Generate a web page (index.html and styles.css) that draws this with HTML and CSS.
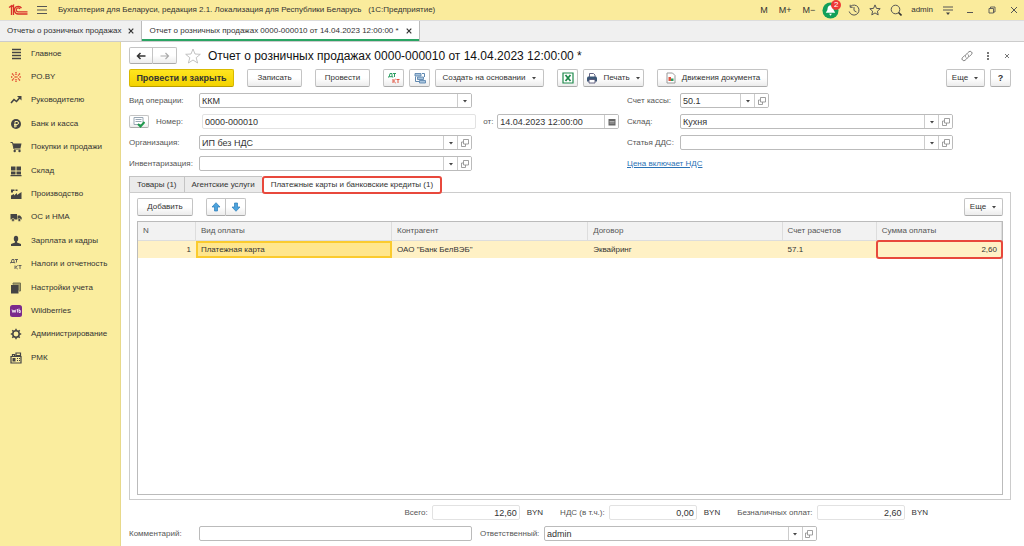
FILE: index.html
```html
<!DOCTYPE html>
<html lang="ru">
<head>
<meta charset="utf-8">
<title>Отчет о розничных продажах</title>
<link rel="stylesheet" href="styles.css">
</head>
<body>
<svg class="defs" width="0" height="0" aria-hidden="true">
  <symbol id="open" viewBox="0 0 10 10"><path d="M3.500 1.500h5v4.500h-5zM3.500 4H1.500v4.500h4V6" fill="none" stroke="#888" stroke-width=".8"/></symbol>
  <symbol id="caret" viewBox="0 0 6 4"><path d="M1 1h4L3 3.500z" fill="#444"/></symbol>
</svg>
<div class="window">
  <header class="titlebar">
    <svg class="logo" viewBox="0 0 20 12"><g fill="none" stroke="#d9312a" stroke-width="1.300"><path d="M1 3.500 3.500 1.800V11M3 3.500 5.500 1.300V11"/><path d="M13.500 4.200A3.800 3.800 0 1 0 10.500 10H19.500"/><path d="M12 5A2 2 0 1 0 10.500 7.900H19.500" stroke-width="1.200"/></g></svg>
    <button class="plain" aria-label="Меню"><svg class="ic12" viewBox="0 0 12 12"><path d="M1 2.500h10M1 6h10M1 9.500h10" stroke="#555"/></svg></button>
    <span class="app-title">Бухгалтерия для Беларуси, редакция 2.1. Локализация для Республики Беларусь &nbsp;&nbsp;(1С:Предприятие)</span>
    <div class="memory"><button class="plain">M</button><button class="plain">M+</button><button class="plain">M−</button></div>
    <div class="sys">
      <button class="plain bell" aria-label="Уведомления"><svg viewBox="0 0 18 18"><circle cx="9" cy="9" r="8.500" fill="#12a05a"/><path d="M9 3.500c-3 .5-3 3-3.300 5L4 11.500h10L12.300 8.500C12 6 11.500 4 9 3.500zM7.500 12.500h3L9 14.500z" fill="#fff"/></svg><span class="badge">2</span></button>
      <button class="plain" aria-label="История"><svg class="ic12" viewBox="0 0 12 12"><path d="M2.500 2.500A5 5 0 1 1 1.200 7.500M6 3v3.500l2.500 1.500M2.200.8v2.500h2.500" fill="none" stroke="#555"/></svg></button>
      <button class="plain" aria-label="Избранное"><svg class="ic12" viewBox="0 0 12 12"><path d="m6 .9 1.500 3.500 3.700.3-2.800 2.500.8 3.700L6 8.900l-3.200 2 .8-3.700L.8 4.700l3.700-.3z" fill="none" stroke="#555"/></svg></button>
      <button class="plain" aria-label="Поиск"><svg class="ic12" viewBox="0 0 12 12"><circle cx="5.500" cy="5.500" r="4.300" fill="none" stroke="#555"/><path d="m8.500 8.500 3 3" stroke="#333" stroke-width="1.600"/></svg></button>
      <button class="plain">admin</button>
      <button class="plain" aria-label="Сервис"><svg class="ic12" viewBox="0 0 12 12"><path d="M1 3h10M1 6h10" stroke="#555"/><path d="M4 8.500h4L6 11z" fill="#444"/></svg></button>
    </div>
    <div class="win">
      <button class="plain" aria-label="Свернуть"><svg class="ic8" viewBox="0 0 8 8"><path d="M1 6.500h6" stroke="#555"/></svg></button>
      <button class="plain" aria-label="Развернуть"><svg class="ic8" viewBox="0 0 8 8"><path d="M1 2.500h4.500v4.500H1zM2.500 2.500V1H7v5H5.500" fill="none" stroke="#555" stroke-width=".9"/></svg></button>
      <button class="plain" aria-label="Закрыть окно"><svg class="ic8" viewBox="0 0 8 8"><path d="m1 1 6 6M7 1 1 7" stroke="#555"/></svg></button>
    </div>
  </header>

  <nav class="doc-tabs">
    <div class="doc-tab"><span>Отчеты о розничных продажах</span><button class="plain" aria-label="Закрыть вкладку"><svg class="ic6" viewBox="0 0 6 6"><path d="m.7.7 4.600 4.600M5.300.7.7 5.300" stroke="#333" stroke-width="1.200"/></svg></button></div>
    <div class="doc-tab current"><span>Отчет о розничных продажах 0000-000010 от 14.04.2023 12:00:00 *</span><button class="plain" aria-label="Закрыть вкладку"><svg class="ic6" viewBox="0 0 6 6"><path d="m.7.7 4.600 4.600M5.300.7.7 5.300" stroke="#333" stroke-width="1.200"/></svg></button></div>
  </nav>

  <div class="body">
    <nav class="sidebar">
      <ul>
        <li><a href="#"><svg viewBox="0 0 12 12"><path d="M2 1.500h9M2 4.500h9M2 7.500h9M2 10.500h9" stroke="#444" stroke-width="1.700"/></svg>Главное</a></li>
        <li><a href="#"><svg viewBox="0 0 12 12"><path d="M6 1v3M6 8v3M1 6h1.500M9.500 6H11M2 2.500l2 2M10 2.500l-2 2M2 9.500l2-2M10 9.500l-2-2M4.500 6h3" stroke="#e0402c" stroke-width="1.300" stroke-dasharray="1.300 .5"/></svg>PO.BY</a></li>
        <li><a href="#"><svg viewBox="0 0 12 12"><path d="m1 9 3-3.500 2.500 2L10 3.500" fill="none" stroke="#444" stroke-width="1.600"/><path d="M7 2h4.500v4.500z" fill="#444"/></svg>Руководителю</a></li>
        <li><a href="#"><svg viewBox="0 0 12 12"><circle cx="6" cy="6" r="5" fill="#444"/><path d="M5 9.500V3.500h2a1.500 1.500 0 0 1 0 3H4M4 8h3" fill="none" stroke="#faed9e"/></svg>Банк и касса</a></li>
        <li><a href="#"><svg viewBox="0 0 12 12"><path d="M.5 1.500H2.500L4 8h6.500" fill="none" stroke="#444"/><path d="M2.800 2.500h8.700L10.500 7H4z" fill="#444"/><circle cx="4.700" cy="10" r="1.200" fill="#444"/><circle cx="9.500" cy="10" r="1.200" fill="#444"/></svg>Покупки и продажи</a></li>
        <li><a href="#"><svg viewBox="0 0 12 12"><path d="M1 1.500h4.500v4H1zM6.500 1.500H11v4H6.500zM1 6.500h4.500v3H1zM6.500 6.500H11v3H6.500zM.5 10h11v1.200H.5z" fill="#444"/></svg>Склад</a></li>
        <li><a href="#"><svg viewBox="0 0 12 12"><path d="M1 11V7.500L4 6v1.500l3-2.500v2l4.500-3v7z" fill="#444"/><path d="M1 1.500h3.500V3H3v1.500H1zM5.500 1.500h2V3h-2z" fill="#444"/></svg>Производство</a></li>
        <li><a href="#"><svg viewBox="0 0 12 12"><path d="M.5 3h6.500v5.500H.5zM7.500 4.500H10l1.700 2v2H7.500z" fill="#444"/><g fill="#444" stroke="#faed9e" stroke-width=".6"><circle cx="3" cy="9" r="1.500"/><circle cx="9.300" cy="9" r="1.500"/></g></svg>ОС и НМА</a></li>
        <li><a href="#"><svg viewBox="0 0 12 12"><ellipse cx="6" cy="3.700" rx="2.200" ry="2.900" fill="#444"/><path d="M5 6h2v1.500l4 1.500v2H1V9l4-1.500z" fill="#444"/></svg>Зарплата и кадры</a></li>
        <li><a href="#"><svg viewBox="0 0 12 12"><g fill="none" stroke="#555" stroke-width=".9"><path d="M.5 5.300V4.500h4.300v.8M1.300 4.500 2 1.500h2v3M5 1.500h3M6.500 1.500v3"/><path d="M5 7.500V11M7.700 7.500 5.500 9.200 7.700 11M8.500 7.500h3M10 7.500V11"/></g></svg>Налоги и отчетность</a></li>
        <li><a href="#"><svg viewBox="0 0 12 12"><path d="M3 2.500V1h7.500v8H9" fill="#a19b6c" stroke="#777450"/><path d="M1 3h7.500v8.500H1z" fill="#444"/></svg>Настройки учета</a></li>
        <li><a href="#"><svg viewBox="0 0 12 12"><rect width="12" height="12" rx="2.500" fill="#7a2a8c"/><path d="m2 4.500 1 3 1-2.500 1 2.500 1-3M7.500 4v3.500M9 3.500v4h1.300V5.500H9" fill="none" stroke="#fff" stroke-width=".8"/></svg>Wildberries</a></li>
        <li><a href="#"><svg viewBox="0 0 12 12"><circle cx="6" cy="6" r="3.200" fill="none" stroke="#444" stroke-width="1.500"/><path d="M6 .8v2M6 9.200v2M.8 6h2M9.200 6h2M2.300 2.300l1.400 1.400M8.300 8.300l1.400 1.400M9.700 2.300 8.300 3.700M3.700 8.300 2.300 9.700" stroke="#444" stroke-width="1.500"/></svg>Администрирование</a></li>
        <li><a href="#"><svg viewBox="0 0 12 12"><path d="M1 4.500h10v6.500H1zM6 1h4.500v2.500H6zM2.500 4V2.500h2V4" fill="none" stroke="#444" stroke-width="1.200"/><path d="M2.500 6h3v3.500h-3zM7 6h1v1H7zM9 6h1v1H9zM7 8h1v1H7zM9 8h1v1H9z" fill="#444"/></svg>РМК</a></li>
      </ul>
    </nav>

    <main class="doc">
      <div class="heading">
        <div class="pair">
          <button class="btn" aria-label="Назад"><svg class="ic10" viewBox="0 0 10 10"><path d="M1.500 5h8M4.500 2 1.500 5l3 3" fill="none" stroke="#333" stroke-width="1.500"/></svg></button>
          <button class="btn" aria-label="Вперед"><svg class="ic10" viewBox="0 0 10 10"><path d="M.5 5h8M5.500 2l3 3-3 3" fill="none" stroke="#aaa" stroke-width="1.200"/></svg></button>
        </div>
        <button class="plain" aria-label="В избранное"><svg class="ic16" viewBox="0 0 16 16"><path d="m8 1 2 5 5.300.3-4.100 3.400 1.400 5.300L8 12l-4.600 3 1.400-5.300L.7 6.300 6 6z" fill="none" stroke="#bbb" stroke-width=".9"/></svg></button>
        <h1>Отчет о розничных продажах 0000-000010 от 14.04.2023 12:00:00 *</h1>
        <div class="heading-tools">
          <button class="plain" aria-label="Ссылка"><svg class="ic12" viewBox="0 0 12 12"><path d="M5 7.500C3.500 6 4.500 5 6.500 3s3-2 4-1 .5 2-1 3.500L8.500 6.500M7 4.500C8.500 6 7.500 7 5.500 9s-3 2-4 1-.5-2 1-3.500L3.500 5.500" fill="none" stroke="#777"/></svg></button>
          <button class="plain" aria-label="Действия"><svg class="ic8" viewBox="0 0 8 8"><path d="M3 0h2v2H3zM3 3h2v2H3zM3 6h2v2H3z" fill="#777"/></svg></button>
          <button class="plain" aria-label="Закрыть"><svg class="ic8" viewBox="0 0 8 8"><path d="m2 2 4 4M6 2 2 6" stroke="#777"/></svg></button>
        </div>
      </div>

      <div class="toolbar">
        <button class="btn primary">Провести и закрыть</button>
        <button class="btn wide">Записать</button>
        <button class="btn wide">Провести</button>
        <div class="group">
          <button class="btn square" aria-label="Дт Кт"><svg class="ic12" viewBox="0 0 12 12"><path d="M.5 5.500V4.700h4.300v.8M1.300 4.500 2 1.500h2v3M5 1.500h3M6.500 1.500V5" fill="none" stroke="#2a9d60"/><path d="M5 7V11M7.700 7 5.500 9l2.200 2M8.500 7.500h3M10 7.500V11" fill="none" stroke="#e0533f"/></svg></button>
          <button class="btn square" aria-label="Структура подчиненности"><svg class="ic12" viewBox="0 0 12 12"><path d="M1 1.500h6v2.500H1zM3.500 5h6v2.500h-6zM5.500 8.500h6V11h-6z" fill="#a9c4dd" stroke="#5f88b0" stroke-width=".9"/><path d="M8 1.500h2.500V5M1.500 4.500v5h3.500" fill="none" stroke="#5f88b0"/></svg></button>
          <button class="btn create">Создать на основании<svg class="caret"><use href="#caret"/></svg></button>
        </div>
        <div class="group">
          <button class="btn square" aria-label="Excel"><svg class="ic12" viewBox="0 0 12 12"><path d="M1 1h10v10H1z" fill="#fff" stroke="#1f8a4c" stroke-width="1.200"/><path d="m3.500 3 5 6M8.500 3l-5 6" stroke="#1f8a4c" stroke-width="1.800"/></svg></button>
          <button class="btn print"><svg class="ic12" viewBox="0 0 12 12"><path d="M3.500 5V1.500h4L9 3v2" fill="#fff" stroke="#557" stroke-width=".9"/><path d="M1 5.500 2 4.500h8l1 1v4H1z" fill="#3d5878"/><path d="M3 7.500h6V11H3z" fill="#fff" stroke="#557" stroke-width=".9"/></svg>Печать<svg class="caret"><use href="#caret"/></svg></button>
        </div>
        <button class="btn moves"><svg class="ic12" viewBox="0 0 12 12"><path d="M2 1h5.500L10 3.500V11H2z" fill="#fff" stroke="#999"/><path d="M3.500 5H6v4H3.500z" fill="#e0533f"/><path d="M6 6.500h2.500V9H6z" fill="#2a9d60"/></svg>Движения документа</button>
        <div class="group end">
          <button class="btn more">Еще<svg class="caret"><use href="#caret"/></svg></button>
          <button class="btn square help">?</button>
        </div>
      </div>

      <form class="form">
        <div class="col-left">
          <div class="row part"><label for="op">Вид операции:</label><div class="field"><input id="op" value="ККМ"><button type="button" aria-label="Выбрать"><svg class="caret"><use href="#caret"/></svg></button></div></div>
          <div class="row">
            <button type="button" class="btn check" aria-label="Проведен"><svg class="ic12" viewBox="0 0 12 12"><path d="M1 1.500h9v7H1z" fill="#fff" stroke="#9aa8b5"/><path d="M2.500 3.500h6M2.500 5.500h6" stroke="#9aa8b5"/><path d="m5 8 2.500 2.500L11.500 6" fill="none" stroke="#1f9a4c" stroke-width="2"/></svg></button>
            <label class="num" for="num">Номер:</label><div class="field light number"><input id="num" value="0000-000010"></div>
            <label class="from" for="date">от:</label><div class="field date"><input id="date" value="14.04.2023 12:00:00"><button type="button" aria-label="Календарь"><svg class="ic8" viewBox="0 0 8 8"><path d="M.5 1h7v6.500h-7z" fill="#666"/><path d="M1.500 3.500h5M1.500 5h5" stroke="#ddd" stroke-width=".6"/></svg></button></div>
          </div>
          <div class="row part"><label for="org">Организация:</label><div class="field"><input id="org" value="ИП без НДС"><button type="button" aria-label="Выбрать"><svg class="caret"><use href="#caret"/></svg></button><button type="button" aria-label="Открыть"><svg class="ic10"><use href="#open"/></svg></button></div></div>
          <div class="row part"><label for="inv">Инвентаризация:</label><div class="field"><input id="inv"><button type="button" aria-label="Выбрать"><svg class="caret"><use href="#caret"/></svg></button><button type="button" aria-label="Открыть"><svg class="ic10"><use href="#open"/></svg></button></div></div>
        </div>
        <div class="col-right">
          <div class="row short"><label for="acc">Счет кассы:</label><div class="field"><input id="acc" value="50.1"><button type="button" aria-label="Выбрать"><svg class="caret"><use href="#caret"/></svg></button><button type="button" aria-label="Открыть"><svg class="ic10"><use href="#open"/></svg></button></div></div>
          <div class="row part"><label for="store">Склад:</label><div class="field"><input id="store" value="Кухня"><button type="button" aria-label="Выбрать"><svg class="caret"><use href="#caret"/></svg></button><button type="button" aria-label="Открыть"><svg class="ic10"><use href="#open"/></svg></button></div></div>
          <div class="row part"><label for="dds">Статья ДДС:</label><div class="field"><input id="dds"><button type="button" aria-label="Выбрать"><svg class="caret"><use href="#caret"/></svg></button><button type="button" aria-label="Открыть"><svg class="ic10"><use href="#open"/></svg></button></div></div>
          <div class="row"><a class="link" href="#">Цена включает НДС</a></div>
        </div>
      </form>

      <div class="tabs">
        <button class="tab">Товары (1)</button><button class="tab">Агентские услуги</button><button class="tab active">Платежные карты и банковские кредиты (1)</button>
      </div>
      <section class="panel">
        <div class="panel-tools">
          <button class="btn add">Добавить</button>
          <div class="pair">
            <button class="btn" aria-label="Вверх"><svg class="ic10" viewBox="0 0 10 10"><path d="M5 .7 9 5H6.500v4h-3V5H1z" fill="#4da3dd" stroke="#2b7db8" stroke-width=".7"/></svg></button>
            <button class="btn" aria-label="Вниз"><svg class="ic10" viewBox="0 0 10 10"><path d="M5 9.300 9 5H6.500V1h-3v4H1z" fill="#4da3dd" stroke="#2b7db8" stroke-width=".7"/></svg></button>
          </div>
          <button class="btn more">Еще<svg class="caret"><use href="#caret"/></svg></button>
        </div>
        <div class="grid">
          <table>
            <thead><tr><th class="c-n">N</th><th class="c-kind">Вид оплаты</th><th class="c-agent">Контрагент</th><th class="c-deal">Договор</th><th class="c-acc">Счет расчетов</th><th class="c-sum">Сумма оплаты</th></tr></thead>
            <tbody><tr><td class="right">1</td><td class="selected">Платежная карта</td><td>ОАО "Банк БелВЭБ"</td><td>Эквайринг</td><td>57.1</td><td class="right marked">2,60</td></tr></tbody>
          </table>
        </div>
      </section>

      <div class="totals">
        <label for="t1">Всего:</label><div class="field light"><input id="t1" value="12,60" readonly></div><span>BYN</span>
        <label for="t2">НДС (в т.ч.):</label><div class="field light"><input id="t2" value="0,00" readonly></div><span>BYN</span>
        <label for="t3">Безналичных оплат:</label><div class="field light"><input id="t3" value="2,60" readonly></div><span>BYN</span>
      </div>
      <div class="footer">
        <label class="comment" for="com">Комментарий:</label><div class="field"><input id="com"></div>
        <label for="resp">Ответственный:</label><div class="field"><input id="resp" value="admin"><button type="button" aria-label="Выбрать"><svg class="caret"><use href="#caret"/></svg></button><button type="button" aria-label="Открыть"><svg class="ic10"><use href="#open"/></svg></button></div>
      </div>
    </main>
  </div>
</div>
</body>
</html>
```
FILE: styles.css
```css
* { box-sizing: border-box; }
body { margin: 0; font: 8px/12px "Liberation Sans", Arial, sans-serif; color: #333; background: #fff; }
button, input { font: inherit; color: inherit; margin: 0; }
svg { display: block; flex: none; }
.defs { position: absolute; }
.ic6 { width: 6px; height: 6px; }
.ic8 { width: 8px; height: 8px; }
.ic10 { width: 10px; height: 10px; }
.ic12 { width: 12px; height: 12px; }
.ic16 { width: 16px; height: 16px; }
.caret { width: 6px; height: 4px; }
.window { min-height: 100vh; display: flex; flex-direction: column; }
.plain { border: 0; padding: 0; background: none; display: flex; align-items: center; white-space: nowrap; }

.titlebar { height: 20px; display: flex; align-items: center; padding: 0 6px 0 8px; background: #faeb9c; }
.logo { width: 20px; height: 12px; margin-right: 8px; }
.app-title { margin-left: 10px; flex: 1; white-space: nowrap; }
.memory { display: flex; gap: 11px; margin-right: 7px; font-size: 9px; }
.sys { display: flex; align-items: center; gap: 9px; }
.bell { position: relative; }
.bell svg { width: 17px; height: 17px; }
.badge { position: absolute; top: -2px; right: -2px; width: 10px; height: 10px; border-radius: 5px; background: #ee3a36; color: #fff; line-height: 10px; text-align: center; }
.win { display: flex; gap: 14px; margin-left: 12px; }

.doc-tabs { height: 22px; display: flex; background: #f0f0f0; border-top: 1px solid #ddd; border-bottom: 1px solid #ccc; }
.doc-tab { display: flex; align-items: center; gap: 7px; padding: 0 7px; white-space: nowrap; border-right: 1px solid #bbb; }
.doc-tab.current { background: #fff; box-shadow: inset 0 -2px #2aa463; }

.body { flex: 1; display: flex; }
.sidebar { width: 121px; flex: none; background: #faed9e; border-right: 1px solid #e8d98a; }
.sidebar ul { list-style: none; margin: 0; padding: 0; height: 65%; display: grid; grid-auto-rows: 1fr; }
.sidebar li { display: flex; align-items: center; }
.sidebar a { display: flex; align-items: center; gap: 9px; padding-left: 10px; color: #333; text-decoration: none; white-space: nowrap; }
.sidebar svg { width: 12px; height: 12px; }

.doc { flex: 1; min-width: 0; display: flex; flex-direction: column; padding: 5px 13px 5px 8px; }
.btn { height: 18px; display: flex; align-items: center; justify-content: center; gap: 5px; padding: 0 8px; border: 1px solid #c4c4c4; border-bottom-color: #aaa; border-radius: 2px; background: linear-gradient(#fff, #fff 50%, #ececec); white-space: nowrap; }
.pair { display: flex; }
.pair .btn { width: 24px; height: 17px; padding: 0; border-radius: 2px 0 0 2px; }
.pair .btn + .btn { border-left: 0; border-radius: 0 2px 2px 0; }
.heading { display: flex; align-items: center; gap: 7px; height: 17px; }
.heading .pair { margin-right: 1px; }
h1 { margin: 0; font-size: 12px; font-weight: 400; line-height: 16px; color: #111; white-space: nowrap; }
.heading-tools { margin-left: auto; display: flex; align-items: center; gap: 11px; }

.toolbar { display: flex; gap: 13px; margin-top: 5px; }
.group { display: flex; gap: 5px; }
.end { margin-left: auto; }
.primary { width: 105px; padding: 0; font-size: 9px; font-weight: 700; color: #333; background: linear-gradient(#ffe51f, #f3d200); border-color: #d8b900; border-bottom-color: #b89d00; }
.wide { width: 55px; padding: 0; }
.square { width: 21px; padding: 0; }
.create { width: 109px; padding: 0; }
.print { width: 61px; padding: 0; }
.moves { width: 111px; padding: 0; }
.more { width: 39px; padding: 0; }
.help { font-size: 9px; font-weight: 700; }

.form { display: flex; gap: 8px; margin-top: 6px; }
.col-left { flex: 490 1 0; }
.col-right { flex: 384 1 0; }
.col-left, .col-right { min-width: 0; display: flex; flex-direction: column; gap: 6px; }
.row { display: flex; align-items: center; height: 15px; }
.row label { width: 70px; flex: none; color: #555; white-space: nowrap; }
.col-left .part { width: 70%; }
.col-right .part { width: 85%; }
.col-right .short { width: 37%; }
.col-right label { width: 53px; }
.field { flex: 1 1 0; min-width: 0; height: 15px; display: flex; border: 1px solid #bbb; border-radius: 2px; background: #fff; overflow: hidden; }
.field input { flex: 1; min-width: 0; width: 0; border: 0; padding: 0 2px; background: none; outline: 0; font-size: 9px; }
.field button { width: 14px; flex: none; padding: 0; border: 0; border-left: 1px solid #ccc; background: #fff; display: flex; align-items: center; justify-content: center; }
.light { border-color: #e2e2e2; }
.check { width: 20px; height: 13px; padding: 0; }
.row .num { width: 46px; margin-left: 7px; }
.number { flex-grow: 275; }
.row .from { width: 14px; margin-left: 7px; }
.date { flex-grow: 121; }
.link { color: #2a72b5; font-size: 8px; }

.tabs { display: flex; align-items: flex-start; margin-top: 5px; height: 16px; }
.tab { height: 17px; border: 1px solid #c4c4c4; border-right: 0; background: #ebebeb; padding: 0 7px; white-space: nowrap; }
.tab.active { background: #fff; border: 2px solid #e8483c; border-radius: 3px; height: 18px; z-index: 1; }
.panel { flex: 1; display: flex; flex-direction: column; border: 1px solid #ccc; padding: 5px 7px 4px; }
.panel-tools { display: flex; align-items: center; }
.add { width: 56px; padding: 0; margin-right: 13px; }
.panel-tools .pair .btn { width: 20px; height: 18px; }
.panel-tools .more { margin-left: auto; }
.grid { flex: 1; margin-top: 5px; border: 1px solid #bbb; }
table { width: 100%; table-layout: fixed; border-collapse: separate; border-spacing: 0; }
th, td { padding: 0 5px; text-align: left; font-weight: 400; white-space: nowrap; }
th { height: 19px; color: #555; background: #f2f2f2; border-right: 1px solid #ddd; border-bottom: 1px solid #ddd; }
td { height: 17px; background: #fff1c5; }
.c-n { width: 6.7%; }
.c-kind { width: 22.7%; }
.c-agent { width: 22.7%; }
.c-deal { width: 22.5%; }
.c-acc { width: 10.9%; }
.c-sum { width: 14.5%; }
.right { text-align: right; }
.selected { background: #ffe68d; box-shadow: inset 0 0 0 2px #fbcb2e; }
.marked { outline: 2px solid #e8483c; outline-offset: -1px; border-radius: 2px; }

.totals { display: flex; align-items: center; justify-content: flex-end; margin-top: 5px; padding-right: 83px; }
.totals label { margin: 0 4px 0 17px; color: #555; }
.totals .field { flex: 0 0 88px; }
.totals input { text-align: right; }
.totals span { margin-left: 7px; }
.footer { display: flex; align-items: center; margin-top: 6px; padding-right: 22%; }
.footer label { width: 64px; margin-left: 8px; color: #555; white-space: nowrap; }
.footer .comment { width: 70px; margin-left: 0; }
```
